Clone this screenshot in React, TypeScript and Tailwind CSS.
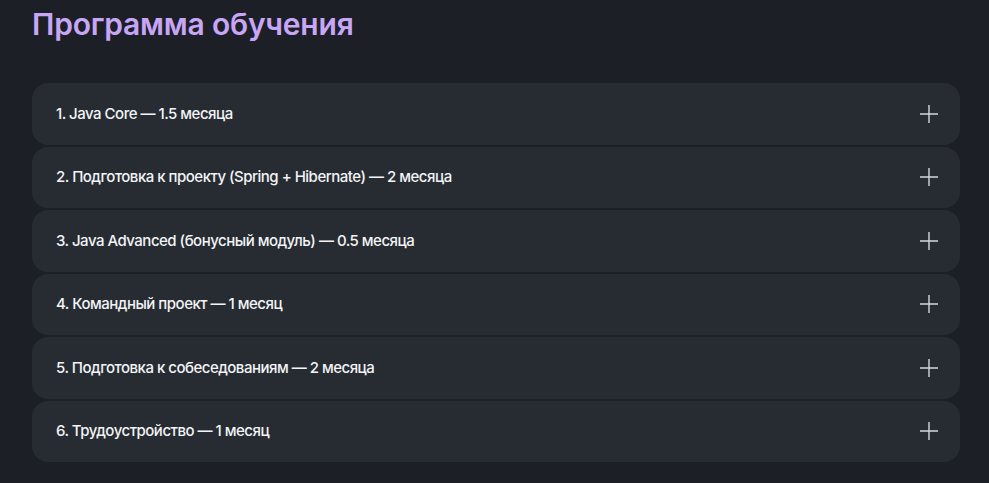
import React, { useState } from "react";

const modules = [
  "1. Java Core — 1.5 месяца",
  "2. Подготовка к проекту (Spring + Hibernate) — 2 месяца",
  "3. Java Advanced (бонусный модуль) — 0.5 месяца",
  "4. Командный проект — 1 месяц",
  "5. Подготовка к собеседованиям — 2 месяца",
  "6. Трудоустройство — 1 месяц",
];

function PlusIcon() {
  return (
    <svg width="20" height="20" viewBox="0 0 20 20" fill="none" stroke="#d4d7dc" strokeWidth="1.4">
      <path d="M10 1v18M1 10h18" />
    </svg>
  );
}

export default function App() {
  const [open, setOpen] = useState<number | null>(null);

  return (
    <div
      className="min-h-[483px] w-full bg-[#1c1f25] px-8 pt-[4px] pb-6 text-white"
      style={{ fontFamily: "Inter, 'Noto Sans', sans-serif" }}
    >
      <h2 className="text-[30px] font-semibold leading-[40px] tracking-[-0.2px] text-[#c8a6f7]">
        Программа обучения
      </h2>

      <div className="mt-[39px] flex w-[928px] flex-col gap-[2px]">
        {modules.map((title, i) => (
          <div
            key={i}
            onClick={() => setOpen(open === i ? null : i)}
            className="flex h-[61.5px] cursor-pointer items-center justify-between rounded-[16px] bg-[#272c33] pl-6 pr-[21px]"
          >
            <span className="text-[15px] font-medium tracking-[-0.5px] text-[#f3f4f6]">{title}</span>
            <PlusIcon />
          </div>
        ))}
      </div>
    </div>
  );
}
